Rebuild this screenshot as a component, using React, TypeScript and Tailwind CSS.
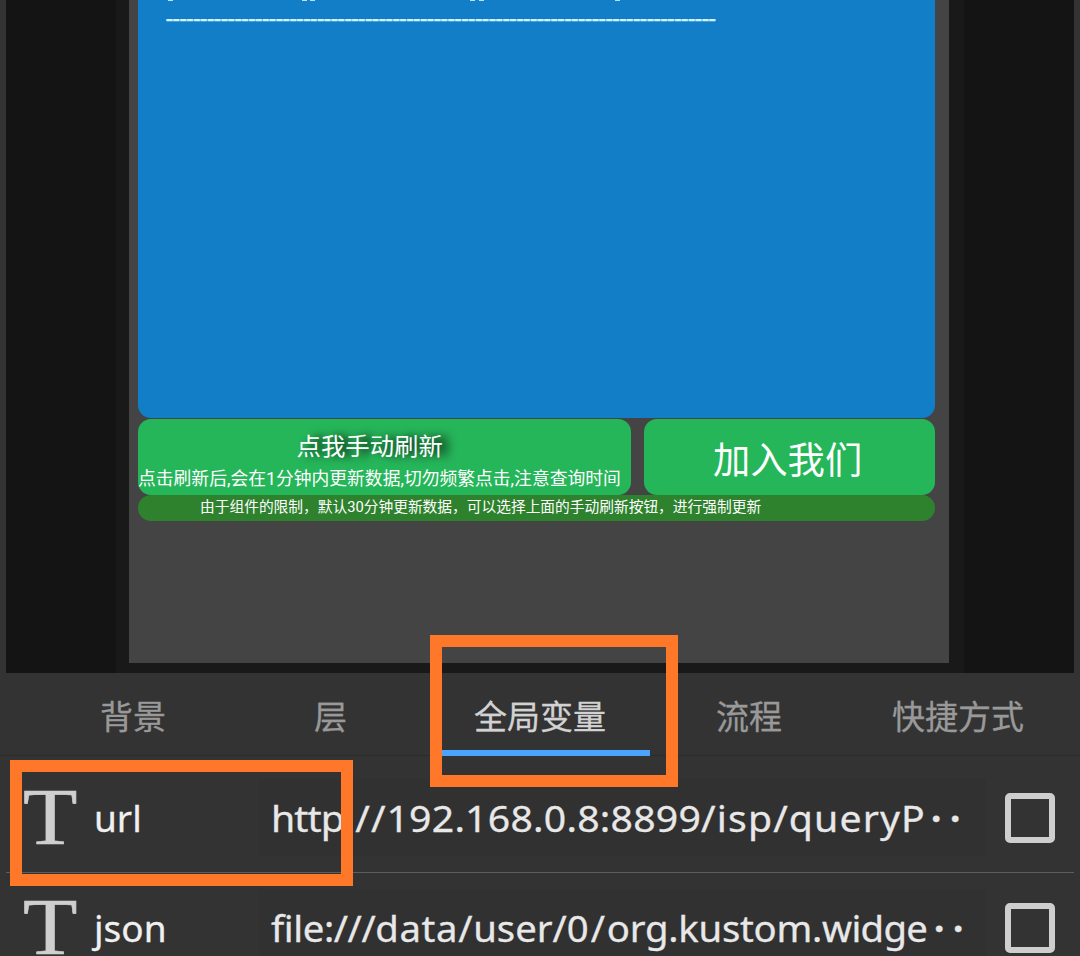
const latin = "font-['Noto_Sans','Noto_Sans_CJK_SC',sans-serif]";

const tabs = [
  { label: '背景', cls: 'left-[100px] text-[#999]' },
  { label: '层', cls: 'left-[314px] text-[#999]' },
  { label: '全局变量', cls: 'left-[474px] text-[#d2d2d2]' },
  { label: '流程', cls: 'left-[716px] text-[#999]' },
  { label: '快捷方式', cls: 'left-[892px] text-[#999]' },
];

type Part = { text: string; cls: string };

const urlParts: Part[] = [
  { text: 'http', cls: 'tracking-[-0.9px]' },
  { text: '://', cls: 'tracking-[0.9px]' },
  { text: '192.168.0.8:8899', cls: 'tracking-[0.2px]' },
  { text: '/isp/queryP', cls: 'tracking-[1.05px]' },
];

const jsonParts: Part[] = [
  { text: 'file:///', cls: 'tracking-[-0.4px]' },
  { text: 'data/', cls: 'tracking-[0.65px]' },
  { text: 'user/', cls: 'tracking-[0px]' },
  { text: '0/', cls: 'tracking-[1.8px]' },
  { text: 'org.', cls: 'tracking-[-0.2px]' },
  { text: 'kustom.', cls: 'tracking-[-0.25px]' },
  { text: 'widge', cls: 'tracking-[-0.7px]' },
];

function Preview() {
  return (
    <div className="mx-[6px] flex h-[673px] justify-center bg-[#141414]">
      <div className="w-[848px] bg-[#191919] pl-[13px]">
        <div className="flex h-[663px] w-[820px] flex-col bg-[#444] pl-[9px]">
          <div className="h-[418px] w-[797px] overflow-hidden rounded-b-[13px] bg-[#137ec8] pl-[28px]">
            <div className="flex h-px">
              <i className="ml-[2px] h-px w-[5px] bg-[#b9e2f5]" />
              <i className="ml-[129px] h-px w-[5px] bg-[#b9e2f5]" />
              <i className="ml-[3px] h-px w-[5px] bg-[#b9e2f5]" />
              <i className="ml-[155px] h-px w-[5px] bg-[#b9e2f5]" />
              <i className="ml-[4px] h-px w-[5px] bg-[#b9e2f5]" />
              <i className="ml-[131px] h-px w-[5px] bg-[#b9e2f5]" />
            </div>
            <div className="mt-[4px] whitespace-nowrap font-['Roboto',sans-serif] text-[24.87px] leading-[29px] text-[#d0f2fd] [-webkit-text-stroke:0.3px_#d0f2fd]">
              {'-'.repeat(80)}
            </div>
          </div>
          <div className="mt-px flex h-[76px] gap-[13px] whitespace-nowrap font-['Roboto','Noto_Sans_CJK_SC',sans-serif] text-white">
            <div className="w-[493px] rounded-[13px] bg-[#26b65a] pt-[13px]">
              <div className="pl-[158.5px] text-[24.4px] leading-[30px] [text-shadow:8px_0px_8px_rgba(0,0,0,0.9)]">点我手动刷新</div>
              <div className="mt-[4px] text-[17.8px] leading-[26px]">点击刷新后,会在1分钟内更新数据,切勿频繁点击,注意查询时间</div>
            </div>
            <div className="w-[291px] rounded-[13px] bg-[#26b65a] pl-[69px] text-[37.3px] leading-[84px]">加入我们</div>
          </div>
          <div className="h-[26px] w-[797px] whitespace-nowrap rounded-[13px] bg-[#2e822d] pl-[62px] font-['Roboto','Noto_Sans_CJK_SC',sans-serif] text-[14.72px] leading-[24px] text-white">
            由于组件的限制，默认30分钟更新数据，可以选择上面的手动刷新按钮，进行强制更新
          </div>
        </div>
      </div>
    </div>
  );
}

function Row({ name, value, valueCls, dotsCls }: { name: string; value: Part[]; valueCls: string; dotsCls: string }) {
  return (
    <div className={`flex h-[77px] items-center whitespace-nowrap text-[37px] leading-[50px] text-[#e8e8e8] ${latin}`}>
      <div className="ml-[23px] w-[71px] shrink-0">
        <div className="w-[49px] origin-left scale-x-[1.1] font-['Liberation_Serif',serif] text-[81px] leading-[77px] text-[#cfcfcf] [-webkit-text-stroke:0.6px_#cfcfcf]">T</div>
      </div>
      <div className="w-[165px] shrink-0 text-[#f0f0f0] [-webkit-text-stroke:0.3px_#f0f0f0]">{name}</div>
      <div className="flex h-[77px] w-[727px] shrink-0 items-center bg-[#313131] pl-[12px] [-webkit-text-stroke:0.3px_#e8e8e8]">
        <div className="w-[660px] shrink-0">
          <div className={`w-fit origin-left ${valueCls}`}>
            {value.map((p) => (
              <span key={p.text} className={p.cls}>{p.text}</span>
            ))}
          </div>
        </div>
        <span className={`font-bold tracking-[8.5px] ${dotsCls}`}>··</span>
      </div>
      <div className="ml-[19px] size-[50px] shrink-0 rounded-[5px] border-[6px] border-[#cecece]" />
    </div>
  );
}

export default function App() {
  return (
    <div className="relative h-[956px] w-[1080px] overflow-hidden bg-[#333]">
      <Preview />
      <div className="relative h-[83px] border-b border-[#2b2b2b] font-['Noto_Sans_CJK_SC',sans-serif] text-[33px] leading-[48px]">
        {tabs.map((t) => (
          <span key={t.label} className={`absolute top-[18px] whitespace-nowrap [-webkit-text-stroke:0.3px_currentColor] ${t.cls}`}>{t.label}</span>
        ))}
        <div className="absolute left-[430px] top-[77px] h-[6px] w-[220px] bg-[#4ba3fb]" />
      </div>
      <div className="pt-[23px]">
        <Row name="url" value={urlParts} valueCls="scale-x-[1.06]" dotsCls="ml-0" />
        <div className="mx-[6px] mb-[16px] mt-[16px] h-px bg-[#5c5e5d]" />
        <Row name="json" value={jsonParts} valueCls="scale-x-[1.035]" dotsCls="ml-[3px]" />
      </div>
      <div className="absolute left-[430px] top-[635px] h-[152px] w-[248px] border-[12px] border-[#ff7728]" />
      <div className="absolute left-[10px] top-[760px] h-[126px] w-[343px] border-[12px] border-[#ff7728]" />
    </div>
  );
}
